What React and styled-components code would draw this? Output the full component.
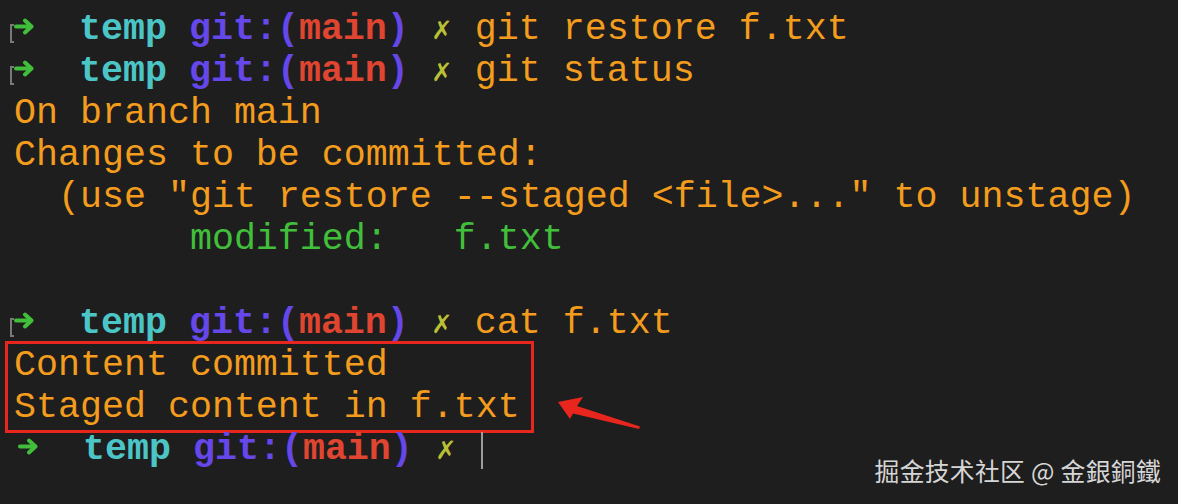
import React from 'react'
import styled, { createGlobalStyle } from 'styled-components'

const GlobalStyle = createGlobalStyle`
  html, body {
    margin: 0;
    padding: 0;
    background: #1e1e1e;
  }
`

const colors = {
  bg: '#1e1e1e',
  orange: '#f39c1d',
  green: '#41bf3b',
  cyan: '#4cc5c7',
  purple: '#6547ea',
  red: '#df4530',
  cross: '#b9c035',
  mark: '#8a8a8a',
  annotate: '#e8261e',
}

// one terminal column at 36.65px Liberation Mono
const COL = 22

const Screen = styled.div`
  position: relative;
  width: 1178px;
  height: 504px;
  overflow: hidden;
  background: ${ colors.bg };
  box-sizing: border-box;
  padding: 8px 0 0 14px;
  font-family: "Liberation Mono", "Courier New", monospace;
  font-size: 36.65px;
`

const Line = styled.div`
  height: 42px;
  line-height: 42px;
  white-space: pre;
  color: ${ ({ color }) => color || colors.orange };
`

const Mark = styled.span`
  display: inline-block;
  box-sizing: border-box;
  width: 4px;
  height: 19px;
  margin: 0 -4px 0 -4px;
  border: 2px solid ${ colors.mark };
  border-right: none;
  vertical-align: -4px;
  opacity: 0.85;
`

const ArrowCell = styled.span`
  display: inline-block;
  width: ${ COL + 3 }px;
  vertical-align: middle;
  line-height: 0;
  svg {
    margin-left: 4px;
    margin-top: -5px;
  }
`

const Bold = styled.span`
  font-weight: bold;
  color: ${ ({ color }) => color };
`

const Cross = styled.span`
  display: inline-block;
  width: ${ COL }px;
  font-family: "DejaVu Sans", sans-serif;
  font-weight: bold;
  font-size: 25.5px;
  text-align: center;
  color: ${ colors.cross };
`

const Cursor = styled.span`
  display: inline-block;
  width: 2px;
  height: 37px;
  margin-left: 2px;
  background: #9c9c9c;
  vertical-align: middle;
  margin-top: 2px;
`

const Highlight = styled.div`
  width: fit-content;
  border: 3px solid ${ colors.annotate };
  margin: -3px 0 -5px -9px;
  padding: 0 11px 2px 6px;
`

const Pointer = styled.svg`
  position: absolute;
  left: 550px;
  top: 390px;
`

const Watermark = styled.div`
  position: absolute;
  right: 17px;
  top: 455px;
  font-family: "Noto Sans CJK SC", "Noto Sans CJK TC", sans-serif;
  font-size: 24.8px;
  line-height: 30px;
  color: #d6d6d6;
  letter-spacing: 0.3px;
`

const PromptArrow = () => (
  <ArrowCell>
    <svg width="21" height="17" viewBox="0 0 21 17">
      <path d="M2 8.5 H17" stroke={ colors.green } strokeWidth="4" strokeLinecap="round" fill="none" />
      <path d="M11 2.5 L17.5 8.5 L11 14.5" stroke={ colors.green } strokeWidth="4" strokeLinecap="round" strokeLinejoin="round" fill="none" />
    </svg>
  </ArrowCell>
)

const Prompt = ({ marked, command, cursor }) => (
  <Line>
    { marked && <Mark /> }
    <PromptArrow />
    { '  ' }
    <Bold color={ colors.cyan }>temp</Bold>
    { ' ' }
    <Bold color={ colors.purple }>git:(</Bold>
    <Bold color={ colors.red }>main</Bold>
    <Bold color={ colors.purple }>)</Bold>
    { ' ' }
    <Cross>✗</Cross>
    { command ? ` ${ command }` : ' ' }
    { cursor && <Cursor /> }
  </Line>
)

export default function App() {
  return (
    <>
      <GlobalStyle />
      <Screen>
        <Prompt marked command="git restore f.txt" />
        <Prompt marked command="git status" />
        <Line>On branch main</Line>
        <Line>Changes to be committed:</Line>
        <Line>{ '  (use "git restore --staged <file>..." to unstage)' }</Line>
        <Line color={ colors.green }>{ '        modified:   f.txt' }</Line>
        <Line />
        <Prompt marked command="cat f.txt" />
        <Highlight>
          <Line>Content committed</Line>
          <Line>Staged content in f.txt</Line>
        </Highlight>
        <Prompt cursor />
        <Pointer width="100" height="50" viewBox="550 390 100 50">
          <polygon
            points="558,402 583,397 577,406 640,426.5 639,429 573,413.5 570,419"
            fill={ colors.annotate }
          />
        </Pointer>
        <Watermark>掘金技术社区 @ 金銀銅鐵</Watermark>
      </Screen>
    </>
  )
}
